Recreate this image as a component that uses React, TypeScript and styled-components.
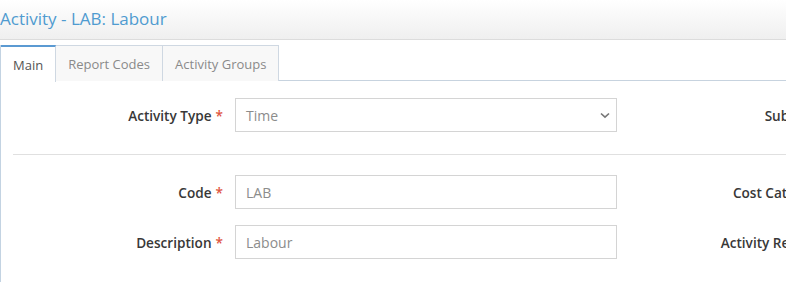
import React from "react";
import styled, { createGlobalStyle } from "styled-components";

const Global = createGlobalStyle`
  html, body { margin: 0; padding: 0; background: #fff; }
  body { font-family: "Open Sans", "Noto Sans", sans-serif; overflow: hidden; width: 786px; height: 282px; }
  * { box-sizing: border-box; }
`;

const Page = styled.div`
  width: 786px;
  height: 282px;
  overflow: hidden;
  display: flex;
  flex-direction: column;
`;

const Header = styled.div`
  height: 40px;
  flex: none;
  display: flex;
  align-items: center;
  padding-bottom: 2px;
  background: linear-gradient(to bottom, #ffffff 0%, #efefef 100%);
  border-bottom: 1px solid #dcdcdc;
`;

const Title = styled.h1`
  margin: 0;
  font-size: 17px;
  font-weight: 400;
  color: #4f9bd0;
  white-space: nowrap;
`;

const Panel = styled.div`
  margin-top: 5px;
  flex: 1;
  border-left: 1px solid #c3d3e2;
  display: flex;
  flex-direction: column;
`;

const TabBar = styled.div`
  display: flex;
  height: 36px;
  border-bottom: 1px solid #c7d3df;
  flex: none;
`;

const Tab = styled.div<{ $active?: boolean }>`
  padding: 0 12px;
  display: flex;
  align-items: center;
  font-size: 13px;
  white-space: nowrap;
  color: ${(p) => (p.$active ? "#555" : "#8a8a8a")};
  background: ${(p) => (p.$active ? "#fff" : "#f8f8f8")};
  border-top: ${(p) => (p.$active ? "2px solid #5b9ad2" : "1px solid #cfd8e2")};
  border-right: 1px solid #cfd8e2;
  margin-bottom: ${(p) => (p.$active ? "-1px" : "0")};
  height: ${(p) => (p.$active ? "37px" : "36px")};
`;

const Body = styled.div`
  padding: 17px 0 0 12px;
`;

const FormRow = styled.div`
  display: grid;
  grid-template-columns: 210px 382px 195px 382px;
  column-gap: 12px;
  align-items: center;
  height: 34px;
  width: 1300px;
`;

const Label = styled.label`
  text-align: right;
  font-size: 13.6px;
  font-weight: 600;
  color: #383838;
  white-space: nowrap;
`;

const Req = styled.span`
  color: #e0553f;
  margin-left: 4px;
`;

const Field = styled.div`
  height: 34px;
  border: 1px solid #d4d4d4;
  background: #fff;
  display: flex;
  align-items: center;
  padding: 0 10px 0 10px;
  font-size: 14px;
  color: #8c8c8c;
  justify-content: space-between;
`;

const SelectField = styled(Field)`
  padding-right: 6px;
`;

const Divider = styled.div`
  height: 1px;
  background: #e0e0e0;
  margin: 22px 0 20px 0;
`;

const Stack = styled.div`
  display: flex;
  flex-direction: column;
  gap: 16px;
`;

const Chevron = () => (
  <svg width="10" height="7" viewBox="0 0 10 7">
    <path d="M1 1.5 L5 5.2 L9 1.5" fill="none" stroke="#777" strokeWidth="1.6" />
  </svg>
);

export default function App() {
  return (
    <Page>
      <Global />
      <Header>
        <Title>Activity - LAB: Labour</Title>
      </Header>
      <Panel>
        <TabBar>
          <Tab $active>Main</Tab>
          <Tab>Report Codes</Tab>
          <Tab>Activity Groups</Tab>
        </TabBar>
        <Body>
          <FormRow>
            <Label>
              Activity Type<Req>*</Req>
            </Label>
            <SelectField>
              <span>Time</span>
              <Chevron />
            </SelectField>
            <Label>Sub Type</Label>
            <Field />
          </FormRow>
          <Divider />
          <Stack>
            <FormRow>
              <Label>
                Code<Req>*</Req>
              </Label>
              <Field>LAB</Field>
              <Label>Cost Category</Label>
              <Field />
            </FormRow>
            <FormRow>
              <Label>
                Description<Req>*</Req>
              </Label>
              <Field>Labour</Field>
              <Label>Activity Reports</Label>
              <Field />
            </FormRow>
          </Stack>
        </Body>
      </Panel>
    </Page>
  );
}
